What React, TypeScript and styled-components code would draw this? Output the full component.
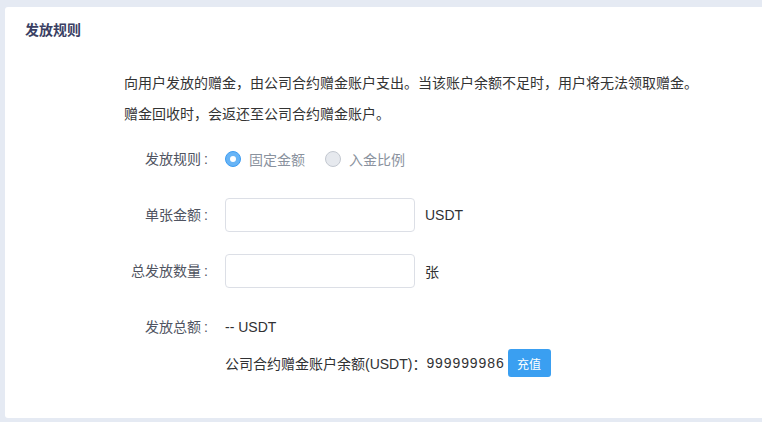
import React from "react";
import styled, { createGlobalStyle } from "styled-components";

const GlobalStyle = createGlobalStyle`
  html, body {
    margin: 0;
    padding: 0;
    background: #e5eaf3;
    overflow: hidden;
  }
  body {
    font-family: "Liberation Sans", "Noto Sans CJK SC", sans-serif;
    font-size: 14px;
    color: #303133;
  }
`;

const App = () => {
  return (
    <>
      <GlobalStyle />
      <Page>
        <Card>
          <CardTitle>发放规则</CardTitle>
          <Body>
            <Notice>
              向用户发放的赠金，由公司合约赠金账户支出。当该账户余额不足时，用户将无法领取赠金。
            </Notice>
            <Notice>赠金回收时，会返还至公司合约赠金账户。</Notice>
            <Form>
              <FormItem>
                <Label>
                  发放规则<Colon>:</Colon>
                </Label>
                <Field>
                  <RadioOption>
                    <RadioDot $checked />
                    <RadioText>固定金额</RadioText>
                  </RadioOption>
                  <RadioOption>
                    <RadioDot />
                    <RadioText>入金比例</RadioText>
                  </RadioOption>
                </Field>
              </FormItem>
              <FormItem>
                <Label>
                  单张金额<Colon>:</Colon>
                </Label>
                <Field>
                  <Input />
                  <Unit>USDT</Unit>
                </Field>
              </FormItem>
              <FormItem>
                <Label>
                  总发放数量<Colon>:</Colon>
                </Label>
                <Field>
                  <Input />
                  <Unit>张</Unit>
                </Field>
              </FormItem>
              <FormItem>
                <Label>
                  发放总额<Colon>:</Colon>
                </Label>
                <Stack>
                  <Field>-- USDT</Field>
                  <BalanceRow>
                    公司合约赠金账户余额(USDT)：<Amount>999999986</Amount>
                    <Button>充值</Button>
                  </BalanceRow>
                </Stack>
              </FormItem>
            </Form>
          </Body>
        </Card>
      </Page>
    </>
  );
};

export default App;

const Page = styled.div`
  padding: 7px 0 4px 5px;
  height: 422px;
  box-sizing: border-box;
`;

const Card = styled.div`
  background: #ffffff;
  border-radius: 3px;
  margin-right: -20px;
  height: 411px;
  box-sizing: border-box;
  padding: 13px 20px 0 20px;
`;

const CardTitle = styled.h2`
  margin: 0;
  font-size: 14px;
  line-height: 20px;
  font-weight: 600;
  color: #3a3f63;
`;

const Body = styled.div`
  padding: 28px 0 0 99px;
`;

const Notice = styled.p`
  margin: 0;
  font-size: 14px;
  line-height: 31px;
  color: #333333;
`;

const Form = styled.div`
  margin-top: 12px;
  display: flex;
  flex-direction: column;
  gap: 22px;
`;

const FormItem = styled.div`
  display: flex;
  align-items: flex-start;
`;

const Label = styled.div`
  width: 101px;
  box-sizing: border-box;
  padding-right: 17px;
  text-align: right;
  line-height: 34px;
  color: #4f5461;
  flex-shrink: 0;
`;

const Colon = styled.span`
  padding-left: 3px;
`;

const Field = styled.div`
  display: flex;
  align-items: center;
  height: 34px;
  color: #303133;
`;

const Stack = styled.div`
  display: flex;
  flex-direction: column;
  gap: 5px;
`;

const RadioOption = styled.label`
  display: flex;
  align-items: center;
  margin-right: 20px;
`;

const RadioDot = styled.span<{ $checked?: boolean }>`
  width: 16px;
  height: 16px;
  box-sizing: border-box;
  border-radius: 50%;
  border: 1px solid ${(p) => (p.$checked ? "#3d9cf2" : "#c3c8d0")};
  background: ${(p) => (p.$checked ? "#67b4f6" : "#e6e9ee")};
  display: flex;
  align-items: center;
  justify-content: center;
  &::after {
    content: "";
    display: ${(p) => (p.$checked ? "block" : "none")};
    width: 6px;
    height: 6px;
    border-radius: 50%;
    background: #ffffff;
  }
`;

const RadioText = styled.span`
  margin-left: 8px;
  color: #8a929e;
`;

const Input = styled.input`
  width: 190px;
  height: 34px;
  box-sizing: border-box;
  border: 1px solid #dcdfe6;
  border-radius: 4px;
  outline: none;
  padding: 0 10px;
  font: inherit;
`;

const Unit = styled.span`
  margin-left: 10px;
  color: #303133;
`;

const BalanceRow = styled.div`
  display: flex;
  align-items: center;
  height: 28px;
  color: #303133;
`;

const Amount = styled.span`
  letter-spacing: 0.9px;
`;

const Button = styled.button`
  margin-left: 3px;
  height: 28px;
  width: 43px;
  border: none;
  border-radius: 3px;
  background: #3a9ff1;
  color: #ffffff;
  font: inherit;
  font-size: 12px;
  padding: 0;
  cursor: pointer;
`;
